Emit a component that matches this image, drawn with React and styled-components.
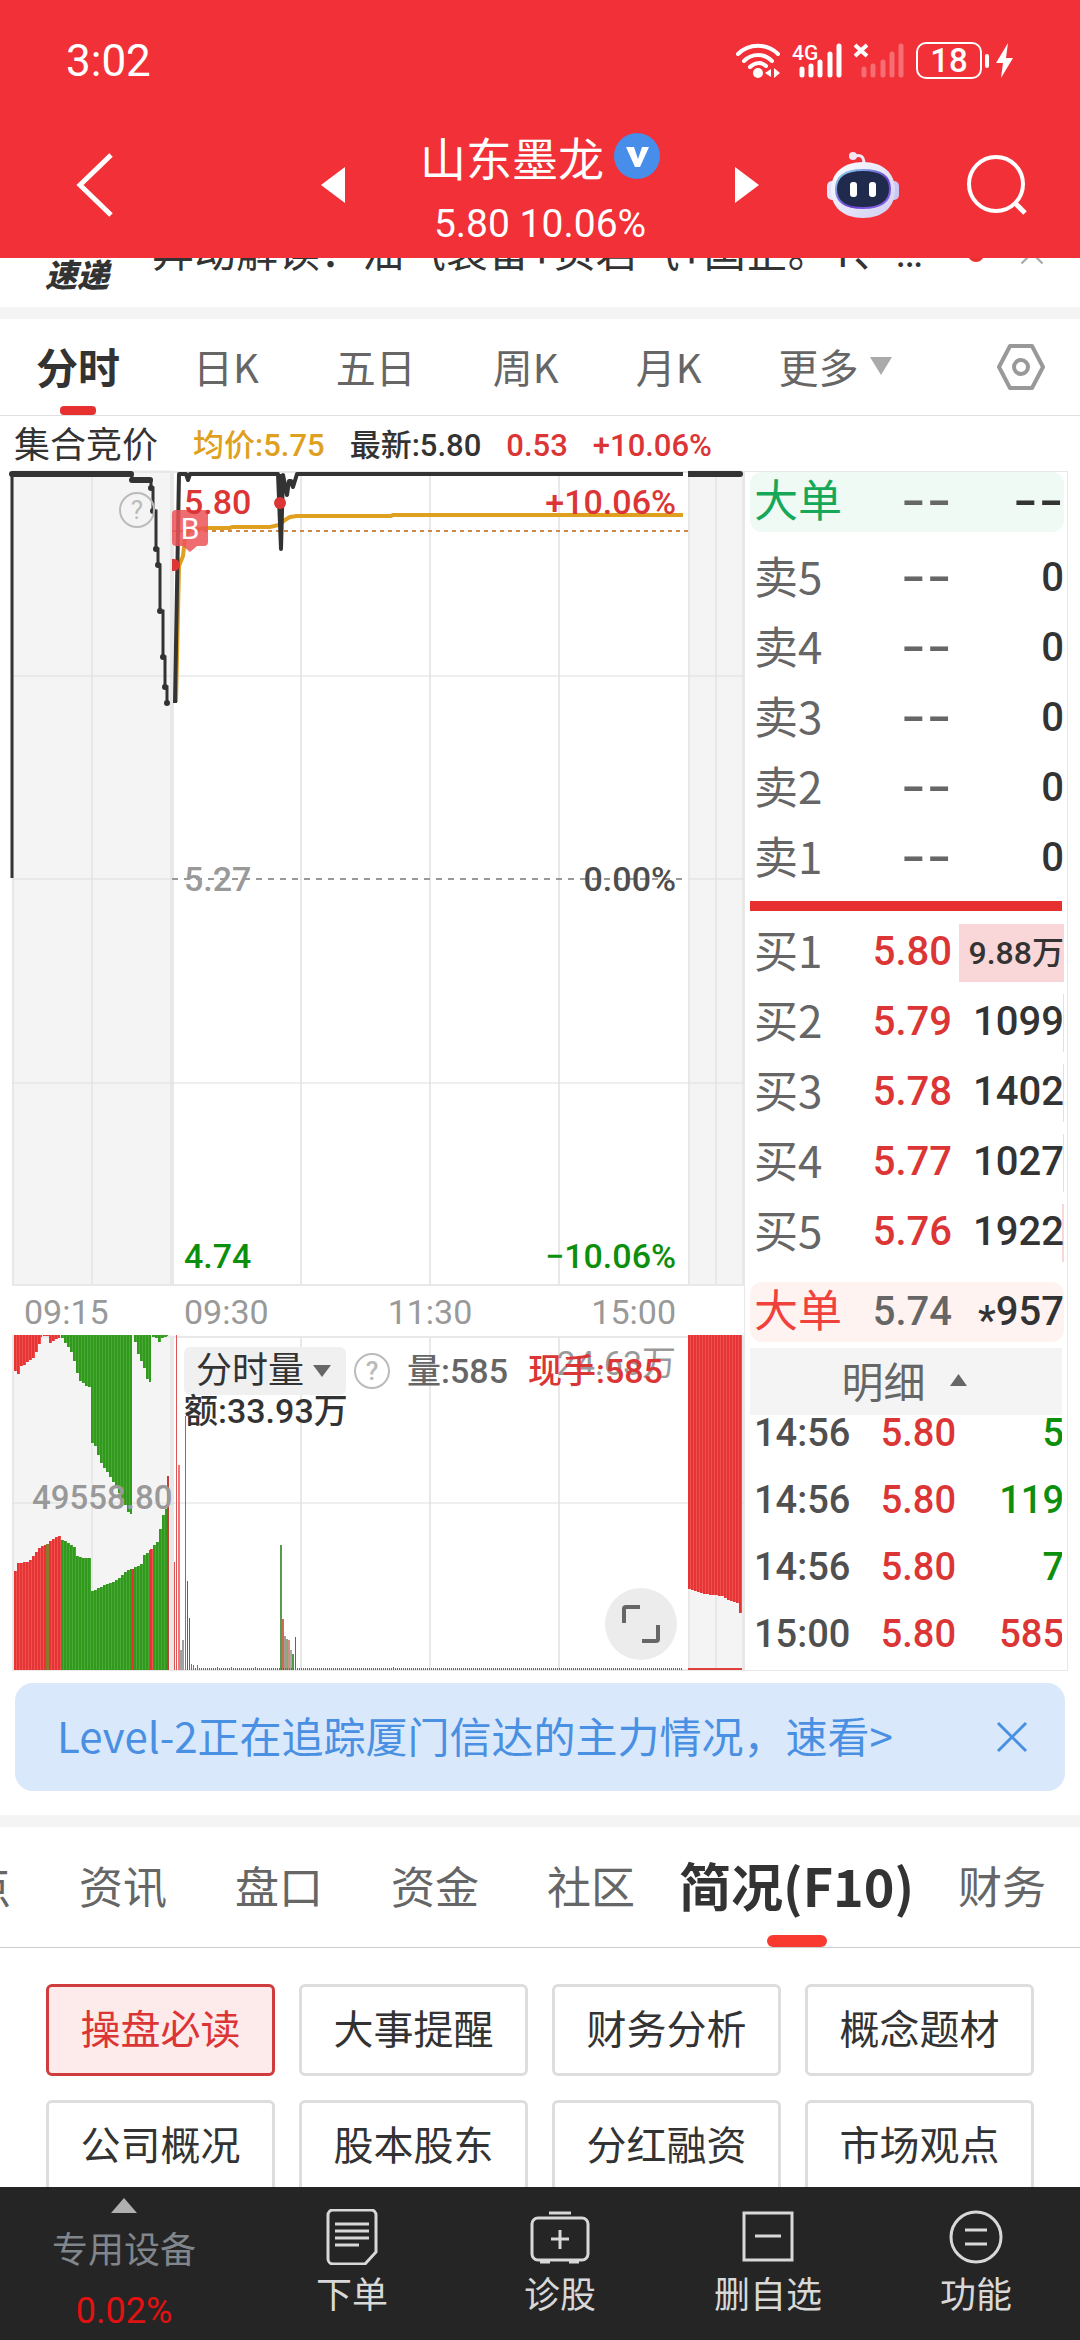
import React from "react";
import styled, { createGlobalStyle } from "styled-components";

const Palette = {
  header: "#f23038",
  red: "#dc3535",
  bar: "#e73131",
  green: "#0c8f0c",
  orange: "#dfa020",
  text: "#333333",
  gray: "#666666",
  light: "#999999",
  line: "#e8e8e8",
  blue: "#4a90e2",
};

const cjkFont = `"Noto Sans CJK SC", sans-serif`;
const numFont = `Roboto, "Noto Sans CJK SC", sans-serif`;

const sells = ["卖5", "卖4", "卖3", "卖2", "卖1"];
const buys = [
  { label: "买1", price: "5.80", volume: "9.88万", depth: 94, small: true },
  { label: "买2", price: "5.79", volume: "1099", depth: 1 },
  { label: "买3", price: "5.78", volume: "1402", depth: 1 },
  { label: "买4", price: "5.77", volume: "1027", depth: 1 },
  { label: "买5", price: "5.76", volume: "1922", depth: 2 },
];
const trades = [
  { time: "14:56", price: "5.80", volume: "5", color: Palette.green },
  { time: "14:56", price: "5.80", volume: "119", color: Palette.green },
  { time: "14:56", price: "5.80", volume: "7", color: Palette.green },
  { time: "15:00", price: "5.80", volume: "585", color: Palette.red },
];
const topics = [
  "操盘必读",
  "大事提醒",
  "财务分析",
  "概念题材",
  "公司概况",
  "股本股东",
  "分红融资",
  "市场观点",
];

/* auction volume, [x, y] in chart units */
const V_BASE = 335;
const unmatched = [
  { color: "r", pts: [[14, 33], [16, 38], [18, 39], [20, 32], [25, 29], [30, 25], [35, 21], [37, 12], [40, 7], [42, 2]] },
  { color: "r", pts: [[43, 1], [49, 1]] },
  { color: "r", pts: [[49, 8], [55, 5], [60, 2]] },
  {
    color: "g",
    pts: [[61, 2], [64, 6], [68, 12], [71, 17], [74, 26], [77, 38], [79, 45], [85, 50], [89, 52], [90, 87], [92, 108], [96, 112], [99, 124], [103, 132], [108, 138], [112, 145], [117, 153], [120, 160], [125, 170], [129, 179], [132, 179]],
  },
  { color: "g", pts: [[134, 3], [136, 10], [137, 15], [139, 22], [142, 28], [144, 33], [146, 43], [149, 47], [151, 47]] },
  { color: "g", pts: [[152, 2], [157, 3], [158, 10], [160, 3], [168, 1]] },
  { color: "r", pts: [[688, 254], [694, 255], [699, 258], [712, 260], [722, 261], [727, 265], [734, 267], [738, 268], [739, 278], [742, 278]] },
];
const matched = [
  { color: "r", pts: [[14, 238], [18, 228], [28, 227], [32, 223], [37, 215], [42, 211], [46, 209]] },
  { color: "m", pts: [[46, 209], [49, 208]] },
  { color: "r", pts: [[49, 207], [55, 203], [58, 201], [61, 201]] },
  {
    color: "g",
    pts: [[61, 204], [67, 207], [74, 212], [77, 221], [82, 223], [91, 223], [92, 256], [100, 252], [107, 249], [117, 245], [123, 239], [128, 235], [132, 234]],
  },
  { color: "r", pts: [[132, 234], [134, 233]] },
  { color: "g", pts: [[134, 233], [142, 228], [144, 220], [150, 215]] },
  { color: "r", pts: [[150, 215], [153, 213]] },
  { color: "g", pts: [[153, 211], [157, 207], [159, 198], [162, 185], [164, 175], [167, 173]] },
  { color: "d", pts: [[167, 141], [169, 141]] },
];
/* x, top, color, width */
const minuteBars = [
  [174, 227, "#d85050", 1],
  [176, 0, "#dd5555", 1],
  [178, 130, "#f07878", 2],
  [180, 315, "#a0a0a0", 2],
  [182, 305, "#a0a0a0", 2],
  [185, 81, "#777777", 1],
  [187, 246, "#31861f", 1],
  [189, 283, "#c04030", 1],
  [191, 329, "#777777", 1],
  [193, 330, "#777777", 1],
  [197, 330, "#777777", 1],
  [217, 332, "#777777", 1],
  [231, 332, "#777777", 1],
  [255, 332, "#777777", 1],
  [280, 210, "#5a9a50", 2],
  [282, 284, "#cf6a55", 2],
  [284, 301, "#aa9999", 2],
  [286, 304, "#8aa878", 2],
  [288, 305, "#d09080", 2],
  [290, 315, "#aaaaaa", 2],
  [292, 319, "#4f9a45", 2],
  [295, 302, "#c04030", 1],
  [393, 332, "#777777", 1],
];
const tones = {
  r: ["#e43434", "#f05050"],
  g: ["#31991c", "#4aa838"],
  m: ["#8a7a2c", "#8a7a2c"],
  d: ["#c04038", "#c04038"],
};

const valueAt = (pts, x) => {
  for (let i = 1; i < pts.length; i++) {
    const [x0, y0] = pts[i - 1];
    const [x1, y1] = pts[i];
    if (x <= x1) return y0 + ((y1 - y0) * (x - x0)) / (x1 - x0);
  }
  return pts[pts.length - 1][1];
};

const buildBars = (series, fromTop) =>
  series.flatMap(({ color, pts }, s) => {
    const bars = [];
    const end = pts[pts.length - 1][0];
    for (let x = pts[0][0], i = 0; x < end; x += 3, i++) {
      const y = Math.round(valueAt(pts, x + 1));
      const w = Math.min(3, end - x);
      const top = fromTop ? 0 : y;
      const height = fromTop ? y : V_BASE - y;
      bars.push(
        <g key={`${s}-${i}`}>
          <rect x={x} y={top} width={w} height={height} fill={tones[color][1]} />
          <rect x={x} y={top} width={Math.min(2, w)} height={height} fill={tones[color][0]} />
        </g>
      );
    }
    return bars;
  });

const ChartGrid = ({ height, rows }) => (
  <g>
    <rect x="12" y="0" width="161" height={height} fill="#f4f4f4" />
    <rect x="688" y="0" width="55" height={height} fill="#f4f4f4" />
    <g stroke={Palette.line} strokeWidth="2">
      {[13, 92, 301, 430, 559, 689, 716, 743].map((x) => (
        <path key={x} d={`M${x} 2V${height}`} />
      ))}
      <path d={`M172 2V${height}`} strokeWidth="4" />
      {rows.map((y) => (
        <path key={y} d={`M12 ${y}H744`} strokeWidth="1" stroke="#dedede" />
      ))}
      <path d={`M12 ${height - 1}H744`} />
      <path d="M12 2H744" />
    </g>
  </g>
);

const PriceChart = () => (
  <ChartSvg viewBox="0 0 744 816" aria-hidden="true">
    <ChartGrid height={816} rows={[206, 613]} />
    <path d="M12 409H172M688 409H744" stroke="#dedede" />
    <path d="M172 409H683" stroke="#999" strokeWidth="2" strokeDasharray="6 6" />
    <path d="M172 61H688" stroke="#d08a48" strokeWidth="2" strokeDasharray="4 4" />
    <path
      d="M176 232L179 96L183 86L185 68L189 60L207 58L230 58L232 57L270 57L279 55L285 50L290 47L297 46L391 46L393 45H683"
      fill="none"
      stroke="#dfa020"
      strokeWidth="4"
    />
    <path d="M12 3V408" stroke="#333" strokeWidth="3" />
    <path d="M12 4H131" stroke="#333" strokeWidth="6" strokeLinecap="round" />
    <path d="M132 4V10H151V18H153V41H156V79H158V95H160V141H163V187H165V217H167V233" fill="none" stroke="#333" strokeWidth="3" />
    <path d="M132 10H150" stroke="#333" strokeWidth="6" strokeLinecap="round" />
    <g fill="#333">
      {[[151, 18], [153, 41], [156, 79], [158, 95], [160, 141], [163, 187], [165, 217], [167, 233]].map(([x, y]) => (
        <circle key={y} cx={x} cy={y} r="3" />
      ))}
    </g>
    <path
      d="M175 233L179 4H186L188 10L190 4H278L281 79L283 5L287 25L289 11L291 11L293 17L297 4H683"
      fill="none"
      stroke="#333"
      strokeWidth="4"
      strokeLinejoin="round"
    />
    <path d="M279 4L281 78L284 4" fill="#333" />
    <path d="M688 4H740" stroke="#333" strokeWidth="6" />
    <circle cx="740" cy="4" r="3" fill="#333" />
    <path d="M172 89H174a6 6 0 0 1 0 12H172z" fill="#dc3535" />
    <circle cx="280" cy="33" r="6" fill="#dc3535" />
    <path d="M176 40H204a4 4 0 0 1 4 4V72a4 4 0 0 1-4 4H197L190 82L183 76H176a4 4 0 0 1-4-4V44a4 4 0 0 1 4-4z" fill="#ec5457" fillOpacity="0.85" />
    <text x="190" y="69" fill="#fff" fontSize="30" fontFamily="Roboto, sans-serif" textAnchor="middle">
      B
    </text>
    <circle cx="137" cy="40" r="17" fill="none" stroke="#bbb" strokeWidth="2" />
    <text x="137" y="49" fill="#bbb" fontSize="26" fontFamily="Roboto, sans-serif" textAnchor="middle">
      ?
    </text>
  </ChartSvg>
);

const VolumeChart = () => (
  <ChartSvg viewBox="0 0 744 336" aria-hidden="true">
    <ChartGrid height={336} rows={[168]} />
    {buildBars(unmatched, true)}
    {buildBars(matched, false)}
    {minuteBars.map(([x, y, color, width]) => (
      <rect key={x} x={x} y={y} width={width} height={V_BASE - y} fill={color} />
    ))}
    <path d="M191 334H683" stroke="#666" strokeWidth="2" strokeDasharray="1 1" />
    <path d="M688 334H742" stroke="#e04040" strokeWidth="2" />
  </ChartSvg>
);

const StatusIcons = () => (
  <svg width="280" height="40" viewBox="0 0 280 40" fill="none" aria-hidden="true">
    <g stroke="#fff" strokeWidth="4" strokeLinecap="round">
      <path d="M2 13C13 2 31 2 42 13" />
      <path d="M8 20C16 12 28 12 36 20" />
      <path d="M14 26C19 21 26 21 30 25" />
    </g>
    <circle cx="22" cy="32" r="5" fill="#fff" />
    <path d="M35 28v8l-6-4zM38 27v10l6-5z" fill="#fff" />
    <text x="56" y="19" fill="#fff" fontSize="21" fontWeight="500" fontFamily={numFont}>
      4G
    </text>
    <g stroke="#fff" strokeWidth="5" strokeLinecap="round">
      <path d="M66 28V34M75 25V34M84 21V34M94 13V34M103 5V34" />
      <path d="M128 28V34M137 25V34M147 21V34M156 13V34M165 5V34" strokeOpacity="0.3" />
    </g>
    <path d="M119 4L131 15M131 4L119 15" stroke="#fff" strokeWidth="4" />
    <rect x="181" y="2" width="64" height="35" rx="9" stroke="#fff" strokeWidth="2" />
    <text x="213" y="31" fill="#fff" fontSize="33" fontWeight="500" fontFamily={numFont} textAnchor="middle">
      18
    </text>
    <path d="M251 15V25" stroke="#fff" strokeWidth="4" strokeLinecap="round" />
    <path d="M272 2L260 22H267L265 37L277 17H270z" fill="#fff" />
  </svg>
);

const RobotIcon = () => (
  <svg width="72" height="68" viewBox="0 0 72 68" aria-hidden="true">
    <defs>
      <linearGradient id="shell" x1="0" y1="0" x2="1" y2="1">
        <stop offset="0" stopColor="#ffffff" />
        <stop offset="1" stopColor="#cfcdf2" />
      </linearGradient>
      <linearGradient id="rim" x1="0" y1="0" x2="1" y2="1">
        <stop offset="0" stopColor="#8be0f0" />
        <stop offset="0.6" stopColor="#6a3fd0" />
        <stop offset="1" stopColor="#8f6cf0" />
      </linearGradient>
    </defs>
    <path d="M28 5C34 3 37 6 37 13" fill="none" stroke="#f0e8f8" strokeWidth="3" />
    <circle cx="26" cy="5" r="4" fill="#f3e6f2" />
    <rect x="0" y="30" width="12" height="19" rx="5" fill="#e6e4fa" />
    <rect x="60" y="30" width="12" height="19" rx="5" fill="#c9c8f2" />
    <path d="M36 11C56 11 68 22 68 39C68 56 56 67 36 67C16 67 4 56 4 39C4 22 16 11 36 11z" fill="url(#shell)" />
    <path d="M36 19C54 19 63 25 63 38C63 51 54 57 36 57C18 57 9 51 9 38C9 25 18 19 36 19z" fill="#202a4c" stroke="url(#rim)" strokeWidth="2" />
    <rect x="23" y="31" width="7" height="15" rx="3" fill="#fff" />
    <rect x="42" y="31" width="7" height="15" rx="3" fill="#fff" />
  </svg>
);

const Cross = ({ size, color }) => (
  <svg width={size} height={size} viewBox="0 0 32 32" aria-hidden="true">
    <path d="M2 2L30 30M30 2L2 30" stroke={color} strokeWidth="3" />
  </svg>
);

const Triangle = ({ width, height, color, up }) => (
  <svg width={width} height={height} viewBox="0 0 20 20" preserveAspectRatio="none" aria-hidden="true">
    <path d={up ? "M10 0L20 20H0z" : "M0 0H20L10 20z"} fill={color} />
  </svg>
);

const App = () => {
  return (
    <Screen>
      <GlobalStyle />
      <Header>
        <StatusBar>
          <span>3:02</span>
          <StatusIcons />
        </StatusBar>
        <NavBar>
          <NavSide $left>
            <IconButton aria-label="返回">
              <svg width="38" height="66" viewBox="0 0 38 66" fill="none">
                <path d="M35 3L4 33L35 63" stroke="#fff" strokeWidth="5" />
              </svg>
            </IconButton>
            <IconButton aria-label="上一只">
              <svg width="24" height="36" viewBox="0 0 24 36">
                <path d="M24 0V36L0 18z" fill="#fff" />
              </svg>
            </IconButton>
          </NavSide>
          <TitleBlock>
            <h1>
              山东墨龙
              <svg width="46" height="46" viewBox="0 0 46 46" aria-hidden="true">
                <circle cx="23" cy="23" r="23" fill="#468eea" />
                <path d="M12 14H20L24 26L28 14H35L26 34H21z" fill="#fff" />
              </svg>
            </h1>
            <p>5.80 10.06%</p>
          </TitleBlock>
          <NavSide>
            <IconButton aria-label="下一只">
              <svg width="24" height="36" viewBox="0 0 24 36">
                <path d="M0 0V36L24 18z" fill="#fff" />
              </svg>
            </IconButton>
            <IconButton aria-label="智能助手">
              <RobotIcon />
            </IconButton>
            <IconButton aria-label="搜索">
              <svg width="60" height="60" viewBox="0 0 60 60" fill="none">
                <circle cx="29" cy="29" r="27" stroke="#fff" strokeWidth="4" />
                <path d="M47 47L58 58" stroke="#fff" strokeWidth="5" />
              </svg>
            </IconButton>
          </NavSide>
        </NavBar>
      </Header>

      <Content>
        <NewsStrip>
          <NewsTag>速递</NewsTag>
          <NewsText href="#news">异动解读：油气装备+页岩气+国企。1、…</NewsText>
          <NewsDot />
          <NewsClose aria-label="关闭">
            <Cross size={24} color="#aaaaaa" />
          </NewsClose>
        </NewsStrip>
        <Band />

        <PeriodTabs>
          <PeriodTab $active>分时</PeriodTab>
          <PeriodTab>日K</PeriodTab>
          <PeriodTab>五日</PeriodTab>
          <PeriodTab>周K</PeriodTab>
          <PeriodTab>月K</PeriodTab>
          <PeriodTab>
            更多
            <Triangle width={22} height={18} color="#aaaaaa" />
          </PeriodTab>
          <SettingButton aria-label="设置">
            <svg width="50" height="48" viewBox="0 0 50 48" fill="none" stroke="#999" strokeWidth="4">
              <path d="M14 3H36L47 24L36 45H14L3 24z" strokeLinejoin="round" />
              <circle cx="25" cy="24" r="7" />
            </svg>
          </SettingButton>
        </PeriodTabs>

        <Quote>
          <ChartColumn>
            <Legend>
              <b>集合竞价</b>
              <Tint $color={Palette.orange}>均价:5.75</Tint>
              <Tint $color={Palette.text}>最新:5.80</Tint>
              <Tint $color={Palette.red}>0.53</Tint>
              <Tint $color={Palette.red}>+10.06%</Tint>
            </Legend>
            <ChartBox>
              <PriceChart />
              <PriceLabels>
                <LabelRow $color={Palette.red}>
                  <span>5.80</span>
                  <span>+10.06%</span>
                </LabelRow>
                <LabelRow $color={Palette.light}>
                  <span>5.27</span>
                  <Tint $color="#4d4d4d">0.00%</Tint>
                </LabelRow>
                <LabelRow $color={Palette.green}>
                  <span>4.74</span>
                  <span>−10.06%</span>
                </LabelRow>
              </PriceLabels>
            </ChartBox>
            <TimeAxis>
              <span>09:15</span>
              <span>09:30</span>
              <span>11:30</span>
              <span>15:00</span>
            </TimeAxis>
            <ChartBox>
              <VolumeChart />
              <AuctionMid>49558.80</AuctionMid>
              <VolumeMax>24.63万</VolumeMax>
              <VolumeInfo>
                <IndicatorButton>
                  分时量
                  <Triangle width={18} height={12} color="#666666" />
                </IndicatorButton>
                <svg width="36" height="36" viewBox="0 0 36 36" aria-hidden="true">
                  <circle cx="18" cy="18" r="17" fill="none" stroke="#bbb" strokeWidth="2" />
                  <text x="18" y="27" fill="#bbb" fontSize="26" fontFamily="Roboto, sans-serif" textAnchor="middle">
                    ?
                  </text>
                </svg>
                <Tint $color={Palette.gray}>量:585</Tint>
                <Tint $color={Palette.red}>现手:585</Tint>
                <Amount>额:33.93万</Amount>
              </VolumeInfo>
              <ExpandButton aria-label="全屏">
                <svg width="38" height="38" viewBox="0 0 38 38" fill="none" stroke="#666" strokeWidth="4">
                  <path d="M2 18V4a2 2 0 0 1 2-2H18M20 36H34a2 2 0 0 0 2-2V20" />
                </svg>
              </ExpandButton>
            </ChartBox>
          </ChartColumn>

          <BookPanel>
            <BigOrder $bg="#f0faf5" $color="#14a858">
              <tbody>
                <tr>
                  <th scope="row">大单</th>
                  <DashCell>--</DashCell>
                  <DashCell $dark>--</DashCell>
                </tr>
              </tbody>
            </BigOrder>
            <BookTable>
              <tbody>
                {sells.map((label) => (
                  <tr key={label}>
                    <th scope="row">{label}</th>
                    <DashCell>--</DashCell>
                    <td>0</td>
                  </tr>
                ))}
              </tbody>
            </BookTable>
            <Divider />
            <BookTable>
              <tbody>
                {buys.map((row) => (
                  <tr key={row.label}>
                    <th scope="row">{row.label}</th>
                    <PriceCell>{row.price}</PriceCell>
                    <VolumeCell $small={row.small}>
                      <Depth style={{ width: `${row.depth}%` }} />
                      <span>{row.volume}</span>
                    </VolumeCell>
                  </tr>
                ))}
              </tbody>
            </BookTable>
            <BigOrder $bg="#fff3f2" $color="#f0423c" $bottom>
              <tbody>
                <tr>
                  <th scope="row">大单</th>
                  <PriceCell $color={Palette.gray}>5.74</PriceCell>
                  <td>
                    <Star>*</Star>957
                  </td>
                </tr>
              </tbody>
            </BigOrder>
            <DetailButton>
              明细
              <Triangle width={17} height={12} color="#666666" up />
            </DetailButton>
            <TradeList>
              <TradeTable>
                <tbody>
                  {trades.map((row, i) => (
                    <tr key={i}>
                      <td>{row.time}</td>
                      <PriceCell>{row.price}</PriceCell>
                      <TradeVolume $color={row.color}>{row.volume}</TradeVolume>
                    </tr>
                  ))}
                </tbody>
              </TradeTable>
            </TradeList>
          </BookPanel>
        </Quote>

        <Banner>
          <a href="#level2">Level-2正在追踪厦门信达的主力情况，速看&gt;</a>
          <IconButton aria-label="关闭提示">
            <Cross size={32} color={Palette.blue} />
          </IconButton>
        </Banner>
        <Band />

        <InfoTabs>
          <InfoTab>点</InfoTab>
          <InfoTab>资讯</InfoTab>
          <InfoTab>盘口</InfoTab>
          <InfoTab>资金</InfoTab>
          <InfoTab>社区</InfoTab>
          <InfoTab $active>简况(F10)</InfoTab>
          <InfoTab>财务</InfoTab>
        </InfoTabs>

        <TopicGrid>
          {topics.map((topic, i) => (
            <TopicButton key={topic} $active={i === 0}>
              {topic}
            </TopicButton>
          ))}
        </TopicGrid>
      </Content>

      <BottomBar>
        <SectorButton>
          <Triangle width={26} height={15} color="#b0b0b0" up />
          <span>专用设备</span>
          <em>0.02%</em>
        </SectorButton>
        <BarButton>
          <svg width="60" height="56" viewBox="0 0 60 56">
            <path d="M11 1H49a5 5 0 0 1 5 5V43L43 55H11a5 5 0 0 1-5-5V6a5 5 0 0 1 5-5z" />
            <path d="M13 15H47M13 22H47M13 29H47M13 36H37" />
          </svg>
          下单
        </BarButton>
        <BarButton>
          <svg width="60" height="56" viewBox="0 0 60 56">
            <rect x="2" y="9" width="56" height="42" rx="6" />
            <path d="M19 4H41M30 21V40M21 30H39M10 53H20M39 53H49" />
          </svg>
          诊股
        </BarButton>
        <BarButton>
          <svg width="60" height="56" viewBox="0 0 60 56">
            <rect x="6" y="4" width="48" height="47" />
            <path d="M17 27H43" />
          </svg>
          删自选
        </BarButton>
        <BarButton>
          <svg width="60" height="56" viewBox="0 0 60 56">
            <circle cx="30" cy="28" r="25" />
            <path d="M19 21H41M19 35H41" />
          </svg>
          功能
        </BarButton>
      </BottomBar>
    </Screen>
  );
};

const GlobalStyle = createGlobalStyle`
  * {
    box-sizing: border-box;
  }
  body {
    margin: 0;
    background: #fff;
    font-family: ${cjkFont};
    color: ${Palette.text};
  }
  h1, p {
    margin: 0;
    font-weight: 400;
  }
  a {
    color: inherit;
    text-decoration: none;
  }
  button {
    padding: 0;
    border: 0;
    background: none;
    color: inherit;
    font: inherit;
  }
  svg {
    display: block;
    flex: none;
  }
`;

const Screen = styled.div`
  display: flex;
  flex-direction: column;
  height: 100vh;
`;

const Header = styled.header`
  flex: none;
  background: ${Palette.header};
  color: #fff;
`;

const StatusBar = styled.div`
  display: flex;
  align-items: center;
  justify-content: space-between;
  height: 122px;
  padding: 0 64px 0 66px;
  font: 400 44px ${numFont};
`;

const NavBar = styled.nav`
  display: grid;
  grid-template-columns: 1fr 390px 1fr;
  height: 136px;
`;

const NavSide = styled.div`
  display: flex;
  align-items: center;
  justify-content: space-between;
  padding: ${(p) => (p.$left ? "0 0 12px 76px" : "0 53px 12px 0")};
`;

const IconButton = styled.button`
  display: flex;
  align-items: center;
`;

const TitleBlock = styled.div`
  padding-top: 2px;
  h1 {
    display: flex;
    align-items: center;
    justify-content: center;
    gap: 10px;
    font-size: 46px;
    line-height: 64px;
  }
  p {
    font: 400 39px/72px ${numFont};
    text-align: center;
  }
`;

const Content = styled.main`
  flex: 1;
  min-height: 0;
  overflow: hidden;
`;

const NewsStrip = styled.div`
  display: flex;
  align-items: flex-end;
  height: 49px;
  padding: 0 36px 0 45px;
  overflow: hidden;
`;

const NewsTag = styled.strong`
  padding-bottom: 18px;
  margin-right: 43px;
  font-size: 32px;
  font-weight: 900;
  font-style: italic;
  line-height: 32px;
`;

const NewsText = styled.a`
  flex: 1;
  padding-bottom: 30px;
  font-family: ${numFont};
  font-size: 42px;
  line-height: 48px;
  white-space: nowrap;
`;

const NewsDot = styled.i`
  width: 16px;
  height: 16px;
  margin: 0 36px 45px 0;
  border-radius: 50%;
  background: ${Palette.bar};
`;

const NewsClose = styled(IconButton)`
  padding-bottom: 42px;
`;

const Band = styled.div`
  height: 12px;
  background: #f4f4f4;
`;

const PeriodTabs = styled.nav`
  display: flex;
  gap: 77px;
  height: 97px;
  padding: 0 34px 0 36px;
  border-bottom: 1px solid #e0e0e0;
`;

const PeriodTab = styled.button`
  position: relative;
  display: flex;
  align-items: center;
  gap: 11px;
  margin-right: ${(p) => (p.$active ? -4 : 0)}px;
  padding-bottom: 2px;
  font-size: ${(p) => (p.$active ? 42 : 40)}px;
  line-height: 60px;
  font-weight: ${(p) => (p.$active ? 700 : 400)};
  color: ${(p) => (p.$active ? Palette.text : Palette.gray)};
  &::after {
    content: "";
    display: ${(p) => (p.$active ? "block" : "none")};
    position: absolute;
    bottom: 0;
    left: 50%;
    width: 36px;
    height: 9px;
    margin-left: -18px;
    border-radius: 4px;
    background: ${Palette.bar};
  }
`;

const SettingButton = styled(IconButton)`
  margin-left: auto;
`;

const Quote = styled.section`
  display: grid;
  grid-template-columns: minmax(0, 1fr) 324px;
  padding-right: 12px;
`;

const ChartColumn = styled.div`
  min-width: 0;
`;

const Legend = styled.div`
  display: flex;
  align-items: center;
  gap: 25px;
  height: 54px;
  padding: 6px 0 0 14px;
  white-space: nowrap;
  font: 500 31px/48px ${numFont};
  b {
    margin-right: 10px;
    font-size: 36px;
    font-weight: 400;
  }
`;

const Tint = styled.span`
  color: ${(p) => p.$color};
`;

const ChartBox = styled.div`
  position: relative;
`;

const ChartSvg = styled.svg`
  width: 100%;
  height: auto;
`;

const PriceLabels = styled.div`
  position: absolute;
  inset: 0;
  display: flex;
  flex-direction: column;
  justify-content: space-between;
  padding: 10px 68px 8px 184px;
`;

const LabelRow = styled.div`
  display: flex;
  justify-content: space-between;
  font: 500 34px/44px ${numFont};
  color: ${(p) => p.$color};
`;

const TimeAxis = styled.div`
  display: grid;
  grid-template-columns: 160px 1fr auto 1fr;
  height: 49px;
  padding: 0 68px 0 24px;
  font: 400 34px/52px ${numFont};
  color: ${Palette.light};
  span:last-child {
    text-align: right;
  }
`;

const AuctionMid = styled.span`
  position: absolute;
  left: 32px;
  top: 143px;
  font: 500 33px/40px ${numFont};
  color: ${Palette.light};
`;

const VolumeMax = styled.span`
  position: absolute;
  right: 68px;
  top: 8px;
  font: 400 34px/40px ${numFont};
  color: ${Palette.light};
`;

const VolumeInfo = styled.div`
  position: absolute;
  left: 184px;
  top: 12px;
  right: 68px;
  display: flex;
  flex-wrap: wrap;
  align-items: center;
  font: 500 34px/48px ${numFont};
  svg + span {
    margin: 0 20px 0 17px;
  }
`;

const IndicatorButton = styled.button`
  display: flex;
  align-items: center;
  gap: 9px;
  margin-right: 8px;
  padding: 0 15px 0 12px;
  border-radius: 6px;
  background: #f0f0f0;
  font: 400 36px/48px ${numFont};
`;

const Amount = styled.div`
  flex-basis: 100%;
  line-height: 32px;
`;

const ExpandButton = styled.button`
  position: absolute;
  right: 67px;
  bottom: 11px;
  display: flex;
  align-items: center;
  justify-content: center;
  width: 72px;
  height: 72px;
  border-radius: 50%;
  background: #ececec;
`;

const BookPanel = styled.div`
  display: flex;
  flex-direction: column;
  margin-top: 55px;
  padding: 0 5px;
  border: 1px solid ${Palette.line};
`;

const BookTable = styled.table`
  width: 100%;
  table-layout: fixed;
  border-collapse: collapse;
  color: ${Palette.text};
  tr {
    height: 70px;
  }
  th,
  td {
    width: 112px;
    padding: 0;
    text-align: right;
    font: 500 40px/52px ${numFont};
    white-space: nowrap;
  }
  th {
    width: 90px;
    padding: 0 0 6px 4px;
    text-align: left;
    font: 400 44px/50px ${cjkFont};
    color: ${(p) => p.$color || Palette.gray};
  }
`;

const BigOrder = styled(BookTable)`
  margin: ${(p) => (p.$bottom ? "15px 0 6px" : "0 0 11px")};
  border-radius: 12px;
  background: ${(p) => p.$bg};
  tr {
    height: 60px;
  }
  th {
    padding-bottom: 8px;
  }
`;

const DashCell = styled.td`
  && {
    padding-bottom: 4px;
    font: 400 56px/52px Inter, sans-serif;
    color: ${(p) => (p.$dark ? Palette.text : Palette.gray)};
  }
`;

const PriceCell = styled.td`
  color: ${(p) => p.$color || Palette.red};
`;

const VolumeCell = styled.td`
  position: relative;
  span {
    position: relative;
    font-size: ${(p) => (p.$small ? 32 : 40)}px;
  }
`;

const Depth = styled.i`
  position: absolute;
  right: 0;
  top: 7px;
  bottom: 5px;
  background: #f9d6d7;
`;

const Star = styled.span`
  vertical-align: sub;
  line-height: 0;
`;

const Divider = styled.div`
  height: 10px;
  margin: 8px 0 6px;
  background: ${Palette.bar};
`;

const DetailButton = styled.button`
  display: flex;
  align-items: center;
  justify-content: center;
  gap: 24px;
  height: 67px;
  padding: 0 4px 4px 0;
  background: #f4f4f4;
  font-size: 42px;
  line-height: 60px;
  color: ${Palette.gray};
`;

const TradeList = styled.div`
  display: flex;
  flex: 1 0 0;
  flex-direction: column;
  justify-content: flex-end;
  min-height: 0;
  overflow: hidden;
`;

const TradeTable = styled(BookTable)`
  flex: none;
  margin-bottom: 3px;
  tr {
    height: 67px;
  }
  td {
    font-size: 38px;
  }
  td:first-child {
    width: 94px;
    padding-left: 4px;
    text-align: left;
    color: #505050;
  }
  td:last-child {
    padding-right: 4px;
  }
`;

const TradeVolume = styled.td`
  color: ${(p) => p.$color};
`;

const Banner = styled.div`
  display: flex;
  align-items: center;
  justify-content: space-between;
  height: 108px;
  margin: 12px 15px 24px;
  padding: 0 37px 0 42px;
  border-radius: 18px;
  background: #d9e8fb;
  color: ${Palette.blue};
  font-size: 42px;
  line-height: 60px;
  white-space: nowrap;
  a {
    padding-bottom: 4px;
  }
`;

const InfoTabs = styled.nav`
  display: flex;
  gap: 68px;
  height: 121px;
  padding-left: 11px;
  overflow: hidden;
  border-bottom: 1px solid #cccccc;
  button:first-child {
    margin-left: -44px;
  }
`;

const InfoTab = styled.button`
  position: relative;
  flex: none;
  margin: ${(p) => (p.$active ? "0 -24px" : "0")};
  padding-bottom: 5px;
  font-size: ${(p) => (p.$active ? 52 : 44)}px;
  line-height: 60px;
  font-weight: ${(p) => (p.$active ? 700 : 400)};
  color: ${(p) => (p.$active ? Palette.text : Palette.gray)};
  &::after {
    content: "";
    display: ${(p) => (p.$active ? "block" : "none")};
    position: absolute;
    bottom: 0;
    left: 50%;
    width: 60px;
    height: 12px;
    margin-left: -30px;
    border-radius: 6px;
    background: #f93a31;
  }
`;

const TopicGrid = styled.div`
  display: grid;
  grid-template-columns: repeat(4, 1fr);
  gap: 24px;
  padding: 36px 46px;
`;

const TopicButton = styled.button`
  height: 92px;
  padding-bottom: 6px;
  border: 3px solid ${(p) => (p.$active ? "#d03c3e" : "#dddddd")};
  border-radius: 6px;
  background: ${(p) => (p.$active ? "#fdeaea" : "#ffffff")};
  color: ${(p) => (p.$active ? Palette.red : Palette.text)};
  font-size: 40px;
  line-height: 60px;
`;

const BottomBar = styled.footer`
  display: grid;
  flex: none;
  grid-template-columns: 248px repeat(4, 1fr);
  height: 153px;
  background: #252525;
  color: #d8d8d8;
  font-size: 36px;
`;

const SectorButton = styled.button`
  display: flex;
  flex-direction: column;
  align-items: center;
  padding-top: 11px;
  span {
    padding-top: 9px;
    line-height: 50px;
    color: #80868b;
  }
  em {
    padding-top: 7px;
    font: 400 36px/64px ${numFont};
    color: #e01212;
  }
`;

const BarButton = styled.button`
  display: flex;
  flex-direction: column;
  align-items: center;
  gap: 2px;
  padding-top: 22px;
  line-height: 50px;
  svg {
    fill: none;
    stroke: #d8d8d8;
    stroke-width: 3px;
  }
`;

export default App;
